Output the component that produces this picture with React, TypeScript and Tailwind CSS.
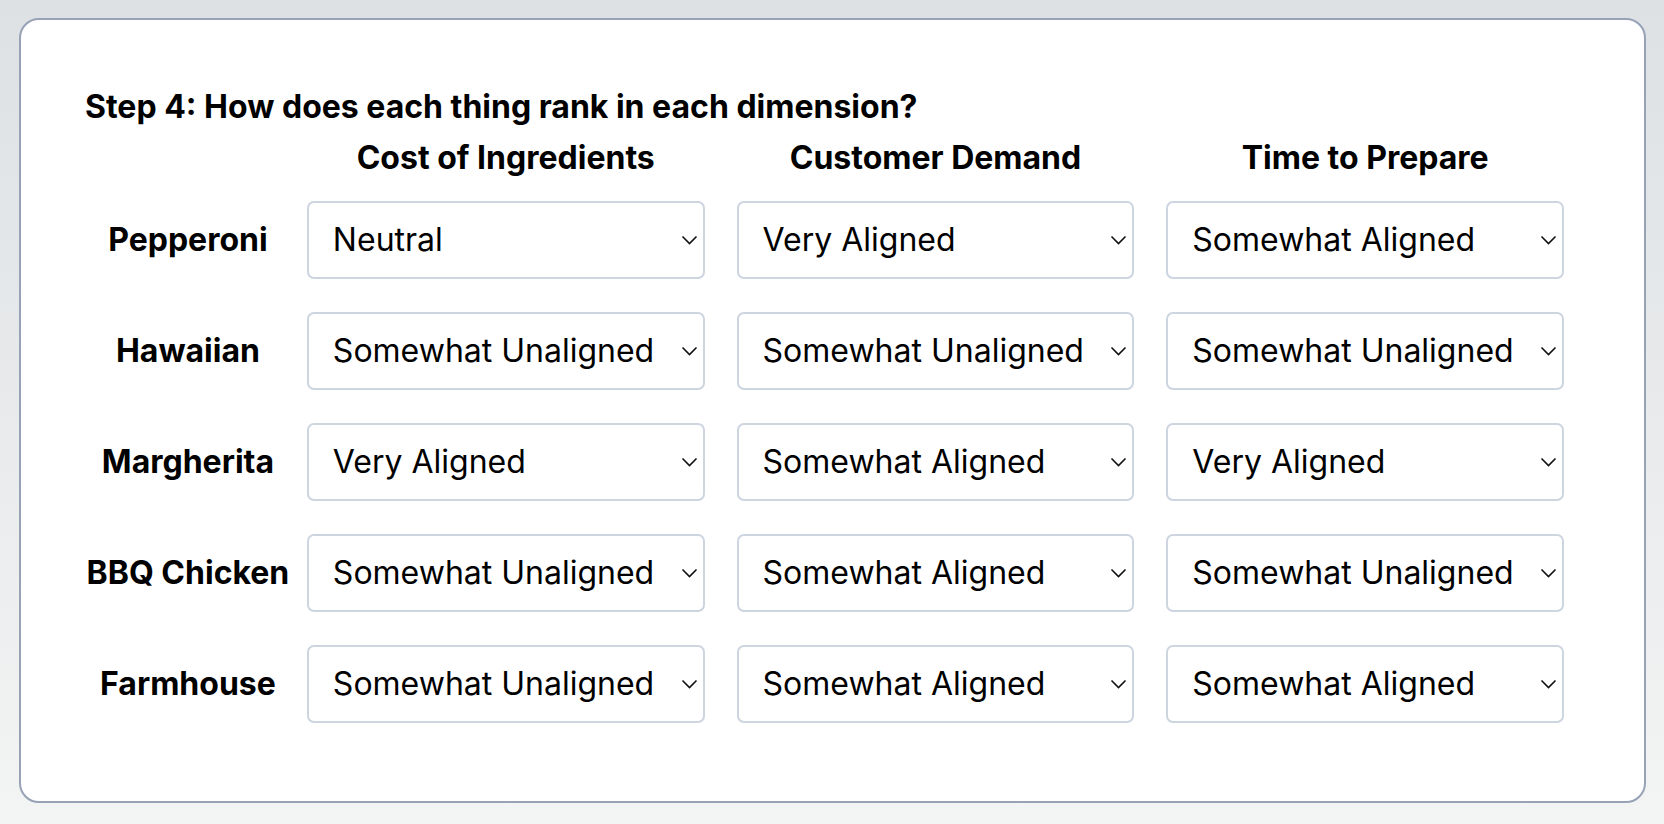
import React from "react";

const dims = ["Cost of Ingredients", "Customer Demand", "Time to Prepare"];
const options = ["Very Unaligned", "Somewhat Unaligned", "Neutral", "Somewhat Aligned", "Very Aligned"];
const rows: [string, string[]][] = [
  ["Pepperoni", ["Neutral", "Very Aligned", "Somewhat Aligned"]],
  ["Hawaiian", ["Somewhat Unaligned", "Somewhat Unaligned", "Somewhat Unaligned"]],
  ["Margherita", ["Very Aligned", "Somewhat Aligned", "Very Aligned"]],
  ["BBQ Chicken", ["Somewhat Unaligned", "Somewhat Aligned", "Somewhat Unaligned"]],
  ["Farmhouse", ["Somewhat Unaligned", "Somewhat Aligned", "Somewhat Aligned"]],
];

function Select({ value }: { value: string }) {
  return (
    <div className="relative w-full h-[78px]">
      <select
        defaultValue={value}
        className="appearance-none w-full h-full bg-white border-2 border-[#cdd5e0] rounded-[7px] pl-[24px] pr-10 text-[32px] text-black outline-none"
        style={{ fontFamily: "Inter, 'Noto Sans', sans-serif" }}
      >
        {options.map((o) => (
          <option key={o} value={o}>
            {o}
          </option>
        ))}
      </select>
      <svg
        className="pointer-events-none absolute right-[7px] top-1/2 -translate-y-1/2"
        width="17"
        height="10"
        viewBox="0 0 17 10"
        fill="none"
      >
        <path d="M1.5 1.5 L8.5 8.5 L15.5 1.5" stroke="#111" strokeWidth="1.6" />
      </svg>
    </div>
  );
}

export default function App() {
  return (
    <div
      className="min-h-screen bg-linear-to-b from-[#dde1e3] to-[#f3f4f4] pl-[19px] pr-[18px] pt-[18px] pb-[20px] text-black"
      style={{ fontFamily: "Inter, 'Noto Sans', sans-serif" }}
    >
      <div className="bg-white border-2 border-[#97a2b6] rounded-[20px] px-16 pt-16 pb-[62px]">
        <h2 className="text-[32px] leading-[45px] font-bold">Step 4: How does each thing rank in each dimension?</h2>
        <div className="flex h-[55px] pt-[6px]">
          <div className="w-[206px]" />
          {dims.map((d) => (
            <div key={d} className="w-[430px] px-4 text-center text-[32px] leading-[45px] font-bold">
              {d}
            </div>
          ))}
        </div>
        {rows.map(([name, vals]) => (
          <div key={name} className="flex items-center h-[111px]">
            <div className="w-[206px] text-center text-[32px] font-bold whitespace-nowrap">{name}</div>
            {vals.map((v, i) => (
              <div key={i} className="w-[430px] px-4">
                <Select value={v} />
              </div>
            ))}
          </div>
        ))}
      </div>
    </div>
  );
}
